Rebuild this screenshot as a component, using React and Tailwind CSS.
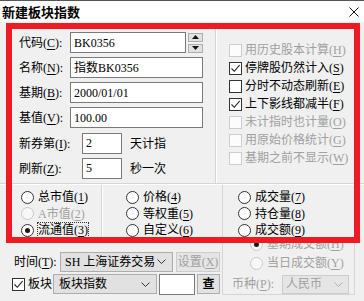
import React from "react";

const U = ({ children }) => (
  <span className="underline underline-offset-[2px] decoration-1">{children}</span>
);

function Check({ checked, disabled }) {
  return (
    <span
      className={`w-[13px] h-[13px] border flex items-center justify-center shrink-0 ${
        disabled ? "border-[#cccccc] bg-[#fcfcfc]" : "border-[#333333] bg-white"
      }`}
    >
      {checked && (
        <svg width="11" height="11" viewBox="0 0 11 11">
          <path d="M1.5 5.5 L4.3 8.3 L9.6 2.2" fill="none" stroke="#222" strokeWidth="1.1" />
        </svg>
      )}
    </span>
  );
}

function Radio({ checked, disabled }) {
  return (
    <span
      className={`w-[13px] h-[13px] rounded-full border flex items-center justify-center shrink-0 ${
        disabled ? "border-[#c8c8c8] bg-[#f7f7f7]" : "border-[#333333] bg-white"
      }`}
    >
      {checked && <span className="w-[5px] h-[5px] rounded-full bg-[#1a1a1a]" />}
    </span>
  );
}

function Chevron({ color = "#333" }) {
  return (
    <svg width="9" height="5" viewBox="0 0 9 5">
      <path d="M0.5 0.5 L4.5 4.5 L8.5 0.5" fill="none" stroke={color} strokeWidth="1" />
    </svg>
  );
}

function CheckRow({ label, k, checked, disabled }) {
  return (
    <div className="h-[18px] flex items-center gap-[3px]">
      <Check checked={checked} disabled={disabled} />
      <span className={disabled ? "text-[#a0a0a0]" : "text-black"}>
        {label}(<U>{k}</U>)
      </span>
    </div>
  );
}

function RadioRow({ label, k, checked, disabled, focus }) {
  return (
    <div className="h-[16.5px] flex items-center gap-[4px]">
      <Radio checked={checked} disabled={disabled} />
      <span
        className={`${disabled ? "text-[#a0a0a0]" : "text-black"} ${
          focus ? "outline outline-1 outline-dotted outline-[#333] leading-[14px]" : ""
        }`}
      >
        {label}(<U>{k}</U>)
      </span>
    </div>
  );
}

function Field({ label, k, value, w = "w-[133px]", spinner }) {
  return (
    <div className="h-[21px] flex items-center">
      <span className="w-[51px] shrink-0">
        {label}(<U>{k}</U>):
      </span>
      <div className={`${w} h-[21px] border border-[#7a7a7a] bg-white flex items-center pl-[3px]`}>
        {value}
      </div>
      {spinner && (
        <div className="ml-[2px] flex flex-col gap-[2px]">
          <div className="w-[15px] h-[9px] bg-[#e1e1e1] border border-[#adadad] flex items-center justify-center">
            <svg width="7" height="4" viewBox="0 0 7 4"><path d="M0 4 L3.5 0 L7 4 Z" fill="#111" /></svg>
          </div>
          <div className="w-[15px] h-[9px] bg-[#e1e1e1] border border-[#adadad] flex items-center justify-center">
            <svg width="7" height="4" viewBox="0 0 7 4"><path d="M0 0 L3.5 4 L7 0 Z" fill="#111" /></svg>
          </div>
        </div>
      )}
    </div>
  );
}

export default function App() {
  return (
    <div className="w-[364px] h-[301px] bg-[#f0f0f0] relative overflow-hidden text-[12px] leading-none text-black font-['Liberation_Serif','Noto_Sans_CJK_SC',serif]">
      {/* title bar */}
      <div className="h-[22px] bg-white border-t border-[#555] flex items-center justify-between pl-[2px] pr-[5px]">
        <span className="text-[13px] font-bold font-['Noto_Sans_CJK_SC',sans-serif]">新建板块指数</span>
        <svg width="10" height="10" viewBox="0 0 10 10">
          <path d="M0.5 0.5 L9.5 9.5 M9.5 0.5 L0.5 9.5" stroke="#111" strokeWidth="1" />
        </svg>
      </div>

      {/* top section */}
      <div className="mt-[7px] h-[155px] flex border-b border-[#d5d5d5] shadow-[0_1px_0_#ffffff]">
        <div className="w-[216px] border-r border-[#d5d5d5] shadow-[1px_0_0_#ffffff] pl-[19px] pt-[3px] flex flex-col gap-[4px]">
          <Field label="代码" k="C" value="BK0356" w="w-[116px]" spinner />
          <Field label="名称" k="N" value="指数BK0356" />
          <Field label="基期" k="B" value="2000/01/01" />
          <Field label="基值" k="V" value="100.00" />
          <div className="mt-[1px] h-[21px] flex items-center">
            <span className="w-[63px] shrink-0">
              新券第(<U>I</U>):
            </span>
            <div className="w-[40px] h-[21px] border border-[#7a7a7a] bg-white pl-[3px] pt-[3px]">2</div>
            <span className="ml-[8px]">天计指</span>
          </div>
          <div className="h-[21px] flex items-center">
            <span className="w-[63px] shrink-0">
              刷新(<U>Z</U>):
            </span>
            <div className="w-[40px] h-[21px] border border-[#7a7a7a] bg-white pl-[3px] pt-[3px]">5</div>
            <span className="ml-[8px]">秒一次</span>
          </div>
        </div>
        <div className="flex-1 pl-[13px] pt-[12px] flex flex-col">
          <CheckRow label="用历史股本计算" k="H" disabled />
          <CheckRow label="停牌股仍然计入" k="S" checked />
          <CheckRow label="分时不动态刷新" k="E" />
          <CheckRow label="上下影线都减半" k="F" checked />
          <CheckRow label="未计指时也计量" k="O" disabled />
          <CheckRow label="用原始价格统计" k="G" disabled />
          <CheckRow label="基期之前不显示" k="W" disabled />
        </div>
      </div>

      {/* bottom section */}
      <div className="flex mt-[1px]">
        <div className="w-[222px] flex flex-col">
          <div className="h-[58px] flex">
            <div className="w-[102px] border-r border-[#d5d5d5] shadow-[1px_0_0_#ffffff] pl-[21px] pt-[4px] flex flex-col">
              <RadioRow label="总市值" k="1" />
              <RadioRow label="A市值" k="2" disabled />
              <RadioRow label="流通值" k="3" checked focus />
            </div>
            <div className="flex-1 pl-[24px] pt-[4px] flex flex-col">
              <RadioRow label="价格" k="4" />
              <RadioRow label="等权重" k="5" />
              <RadioRow label="自定义" k="6" />
            </div>
          </div>
          <div className="mt-[9px] h-[19px] flex items-center pl-[14px]">
            <span className="w-[46px] shrink-0">
              时间(<U>T</U>):
            </span>
            <div className="w-[113px] h-[20px] bg-[#e1e1e1] border border-[#adadad] flex items-center justify-between pl-[4px] pr-[6px]">
              <span>SH 上海证券交易</span>
              <Chevron />
            </div>
            <div className="ml-[3px] w-[44px] h-[20px] bg-[#e5e5e5] border border-[#cccccc] flex items-center justify-center text-[#a0a0a0]">
              设置(<U>X</U>)
            </div>
          </div>
          <div className="mt-[3px] h-[20px] flex items-center pl-[12px]">
            <Check checked />
            <span className="ml-[3px] w-[25px] shrink-0">板块</span>
            <div className="w-[104px] h-[20px] bg-[#e1e1e1] border border-[#adadad] flex items-center justify-between pl-[5px] pr-[6px]">
              <span>板块指数</span>
              <Chevron />
            </div>
            <div className="ml-[2px] w-[36px] h-[21px] bg-white border border-[#7a7a7a]" />
            <div className="ml-[2px] w-[23px] h-[20px] bg-[#e1e1e1] border border-[#adadad] flex items-center justify-center font-bold">
              查
            </div>
          </div>
        </div>
        <div className="w-[133px] h-[110px] border-l border-r border-b border-[#d5d5d5] pl-[15px] pt-[4px] flex flex-col">
          <RadioRow label="成交量" k="7" />
          <RadioRow label="持仓量" k="8" />
          <RadioRow label="成交额" k="9" />
          <div className="mt-[-2px] h-[16px] flex items-center gap-[4px] pl-[12px]">
            <Radio disabled checked />
            <span className="text-[#a0a0a0]">基期成交额(<U>H</U>)</span>
          </div>
          <div className="mt-[2px] h-[18px] flex items-center gap-[4px] pl-[12px]">
            <Radio disabled />
            <span className="text-[#a0a0a0]">当日成交额(<U>Y</U>)</span>
          </div>
          <div className="mt-[2px] h-[20px] flex items-center ml-[-6px]">
            <span className="w-[50px] shrink-0 text-[#a0a0a0]">
              币种(<U>P</U>):
            </span>
            <div className="w-[67px] h-[19px] bg-[#e5e5e5] border border-[#cccccc] flex items-center justify-between pl-[3px] pr-[5px] text-[#a0a0a0]">
              <span>人民币</span>
              <Chevron color="#b0b0b0" />
            </div>
          </div>
        </div>
      </div>

      {/* red highlight annotation */}
      <div className="absolute left-[6px] top-[23px] w-[354px] h-[220px] border-[6px] border-[#ed1c24] pointer-events-none" />
    </div>
  );
}
